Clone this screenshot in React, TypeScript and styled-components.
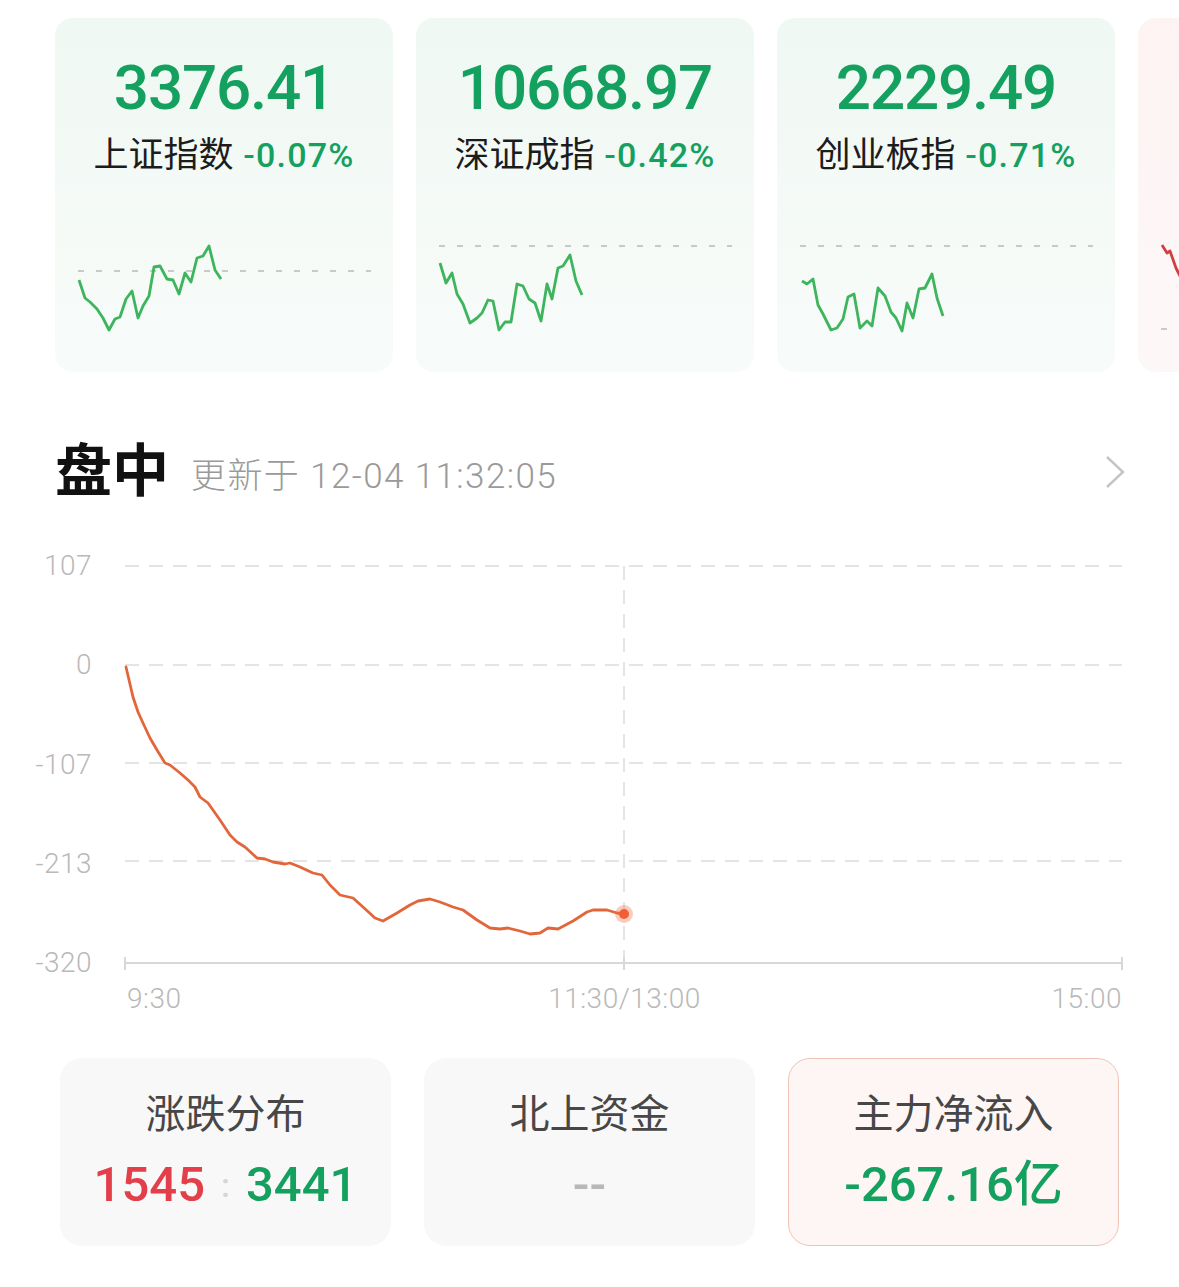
import React from 'react';
import styled, {createGlobalStyle} from 'styled-components';

const GREEN = '#14a05e';
const RED = '#e23f4b';
const FONT = `Roboto, "Noto Sans CJK SC", sans-serif`;

type Pt = [number, number];

type IndexItem = {
    value: string;
    name: string;
    change: string;
    base: number;
    points: Pt[];
    tone: 'down' | 'up';
};

// sparkline points are in card coordinates (svg spans the card width, 150px tall)
const shift = (pts: Pt[], dx: number, dy: number): Pt[] => pts.map(([x, y]) => [x - dx, y - dy]);

const indices: IndexItem[] = [
    {
        value: '3376.41',
        name: '上证指数',
        change: '-0.07%',
        base: 52,
        tone: 'down',
        points: shift([
            [79, 279], [85, 297], [90, 301], [97, 308], [103, 317], [109, 329], [115, 318], [120, 316],
            [126, 298], [132, 290], [138, 317], [143, 305], [149, 295], [154, 266], [160, 265], [167, 278],
            [173, 279], [179, 293], [185, 272], [191, 281], [197, 257], [203, 255], [209, 245], [215, 269], [221, 278],
        ], 55, 218),
    },
    {
        value: '10668.97',
        name: '深证成指',
        change: '-0.42%',
        base: 27,
        tone: 'down',
        points: shift([
            [440, 262], [446, 282], [452, 272], [457, 293], [463, 303], [470, 322], [477, 317], [482, 312],
            [488, 299], [493, 300], [499, 329], [505, 321], [511, 321], [517, 283], [523, 285], [529, 298],
            [535, 302], [541, 320], [547, 283], [552, 298], [558, 267], [563, 265], [570, 254], [576, 280], [582, 294],
        ], 416, 218),
    },
    {
        value: '2229.49',
        name: '创业板指',
        change: '-0.71%',
        base: 27,
        tone: 'down',
        points: shift([
            [802, 280], [807, 283], [813, 278], [818, 304], [823, 313], [831, 329], [837, 327], [843, 318],
            [848, 296], [854, 293], [860, 327], [867, 320], [872, 325], [878, 287], [885, 295], [891, 311],
            [896, 317], [902, 330], [907, 302], [913, 317], [919, 288], [925, 287], [932, 273], [937, 297], [943, 315],
        ], 777, 218),
    },
    {
        value: '',
        name: '',
        change: '',
        base: 111,
        tone: 'up',
        points: [[24, 27], [29, 35], [32, 33], [38, 50], [44, 62]],
    },
];

const flowLine: Pt[] = [
    [126, 667], [133, 697], [138, 712], [143, 723], [150, 738], [157, 750], [165, 763], [170, 765],
    [180, 773], [188, 780], [195, 787], [200, 797], [208, 803], [220, 820], [230, 835], [237, 842],
    [245, 847], [257, 858], [265, 859], [273, 862], [285, 864], [290, 863], [300, 867], [313, 873],
    [322, 875], [330, 885], [340, 895], [353, 898], [363, 907], [375, 918], [383, 921], [397, 913],
    [410, 905], [418, 901], [430, 899], [440, 902], [453, 907], [463, 910], [477, 920], [490, 928],
    [500, 929], [508, 928], [520, 931], [530, 934], [540, 933], [548, 928], [558, 929], [573, 921],
    [587, 912], [593, 910], [607, 910], [617, 913], [624, 914],
];

const toPath = (pts: Pt[]) => pts.map(([x, y]) => `${x},${y}`).join(' ');

const gridRows = [566, 665, 763, 861];

const App = () => (
    <>
        <GlobalStyle/>
        <Page>
            <IndexRow>
                {indices.map((item, i) => (
                    <IndexCard key={i} $tone={item.tone}>
                        <IndexValue>{item.value || '\u00a0'}</IndexValue>
                        <IndexLabel>
                            {item.name || '\u00a0'}
                            {item.change && <IndexChange> {item.change}</IndexChange>}
                        </IndexLabel>
                        <Spark viewBox='0 0 338 150'>
                            <line
                                x1={23}
                                x2={316}
                                y1={item.base}
                                y2={item.base}
                                stroke='#9a9a9a'
                                strokeWidth={1}
                                strokeDasharray='6 12'
                            />
                            <polyline
                                points={toPath(item.points)}
                                fill='none'
                                stroke={item.tone === 'up' ? '#d04040' : '#3cb55c'}
                                strokeWidth={2.8}
                                strokeLinejoin='round'
                            />
                        </Spark>
                    </IndexCard>
                ))}
            </IndexRow>

            <SectionHeader>
                <SectionTitle>盘中</SectionTitle>
                <UpdateTime>更新于 12-04 11:32:05</UpdateTime>
                <Chevron viewBox='0 0 24 36'>
                    <polyline points='4,3 20,18 4,33' fill='none' stroke='#c4c4c4' strokeWidth={2.4}/>
                </Chevron>
            </SectionHeader>

            <ChartRow>
                <YAxis>
                    <AxisText>107</AxisText>
                    <AxisText>0</AxisText>
                    <AxisText>-107</AxisText>
                    <AxisText>-213</AxisText>
                    <AxisText>-320</AxisText>
                </YAxis>
                <ChartSvg viewBox='110 551 1025 427'>
                    {gridRows.map((y) => (
                        <line key={y} x1={125} x2={1122} y1={y} y2={y} stroke='#dcdcdc' strokeWidth={1.5} strokeDasharray='14 10'/>
                    ))}
                    <line x1={624} x2={624} y1={566} y2={963} stroke='#dcdcdc' strokeWidth={1.5} strokeDasharray='14 10'/>
                    <line x1={125} x2={1122} y1={963} y2={963} stroke='#d8d8d8' strokeWidth={2}/>
                    {[125, 624, 1122].map((x) => (
                        <line key={x} x1={x} x2={x} y1={957} y2={970} stroke='#d8d8d8' strokeWidth={2}/>
                    ))}
                    <polyline
                        points={toPath(flowLine)}
                        fill='none'
                        stroke='#e2663a'
                        strokeWidth={2.8}
                        strokeLinejoin='round'
                        strokeLinecap='round'
                    />
                    <circle cx={624} cy={914} r={9} fill='rgba(240, 110, 70, 0.35)'/>
                    <circle cx={624} cy={914} r={5} fill='#f06034'/>
                </ChartSvg>
            </ChartRow>

            <XAxis>
                <AxisText $align='start'>9:30</AxisText>
                <AxisText $align='center'>11:30/13:00</AxisText>
                <AxisText $align='end'>15:00</AxisText>
            </XAxis>

            <StatRow>
                <StatCard>
                    <StatTitle>涨跌分布</StatTitle>
                    <StatValue>
                        <Colored $c={RED}>1545</Colored>
                        <Colon>:</Colon>
                        <Colored $c={GREEN}>3441</Colored>
                    </StatValue>
                </StatCard>
                <StatCard>
                    <StatTitle>北上资金</StatTitle>
                    <StatValue>
                        <Colored $c='#b8b8b8'>--</Colored>
                    </StatValue>
                </StatCard>
                <StatCard $active>
                    <StatTitle>主力净流入</StatTitle>
                    <StatValue>
                        <Colored $c={GREEN}>-267.16亿</Colored>
                    </StatValue>
                </StatCard>
            </StatRow>
        </Page>
    </>
);

const GlobalStyle = createGlobalStyle`
    html, body {
        margin: 0;
        padding: 0;
        background: #ffffff;
    }
    body {
        font-family: ${FONT};
    }
`;

const Page = styled.div`
    width: 1179px;
    height: 1287px;
    overflow: hidden;
    padding-top: 18px;
    box-sizing: border-box;
    background: #ffffff;
`;

const IndexRow = styled.div`
    display: flex;
    gap: 23px;
    padding-left: 55px;
    height: 354px;
    overflow: hidden;
`;

const IndexCard = styled.div<{$tone: 'up' | 'down'}>`
    flex: 0 0 338px;
    height: 354px;
    box-sizing: border-box;
    border-radius: 18px;
    padding-top: 38px;
    display: flex;
    flex-direction: column;
    align-items: center;
    background: ${(p) => (p.$tone === 'up'
        ? 'linear-gradient(180deg, #fdf3f3 0%, #fdf8f8 100%)'
        : 'linear-gradient(180deg, #eff8f3 0%, #f5faf7 60%, #f7fbf9 100%)')};
`;

const IndexValue = styled.div`
    font-size: 62px;
    line-height: 64px;
    font-weight: 500;
    letter-spacing: -1.2px;
    color: ${GREEN};
`;

const IndexLabel = styled.div`
    margin-top: 15px;
    font-size: 35px;
    line-height: 40px;
    color: #1c1c1c;
    white-space: nowrap;
`;

const IndexChange = styled.span`
    font-size: 34px;
    font-weight: 500;
    letter-spacing: 1.2px;
    color: ${GREEN};
`;

const Spark = styled.svg`
    margin-top: 43px;
    width: 338px;
    height: 150px;
    display: block;
`;

const SectionHeader = styled.div`
    display: flex;
    align-items: center;
    margin-top: 70px;
    padding: 0 52px 0 55px;
    height: 60px;
`;

const SectionTitle = styled.div`
    font-size: 57px;
    line-height: 60px;
    font-weight: 700;
    color: #111111;
`;

const UpdateTime = styled.div`
    margin-left: 22px;
    margin-top: 10px;
    font-size: 35px;
    line-height: 40px;
    font-weight: 300;
    letter-spacing: 1.4px;
    color: #9a9a9a;
    flex: 1;
`;

const Chevron = styled.svg`
    width: 24px;
    height: 36px;
`;

const ChartRow = styled.div`
    display: flex;
    margin-top: 49px;
    height: 427px;
`;

const YAxis = styled.div`
    width: 92px;
    display: flex;
    flex-direction: column;
    justify-content: space-between;
    align-items: flex-end;
`;

const AxisText = styled.div<{$align?: 'start' | 'center' | 'end'}>`
    font-size: 28px;
    line-height: 30px;
    font-weight: 300;
    letter-spacing: 0.5px;
    color: #b9b9b9;
    justify-self: ${(p) => p.$align || 'auto'};
`;

const ChartSvg = styled.svg`
    margin-left: 18px;
    width: 1025px;
    height: 427px;
    display: block;
`;

const XAxis = styled.div`
    display: grid;
    grid-template-columns: 1fr auto 1fr;
    margin: 6px 0 0 127px;
    width: 995px;
`;

const StatRow = styled.div`
    display: flex;
    gap: 33px;
    margin-top: 44px;
    padding-left: 60px;
`;

const StatCard = styled.div<{$active?: boolean}>`
    flex: 0 0 331px;
    height: 188px;
    box-sizing: border-box;
    border-radius: 22px;
    padding-top: ${(p) => (p.$active ? '33px' : '34px')};
    display: flex;
    flex-direction: column;
    align-items: center;
    background: ${(p) => (p.$active ? '#fdf6f4' : '#f8f8f8')};
    border: ${(p) => (p.$active ? '1.5px solid #efc4b6' : 'none')};
`;

const StatTitle = styled.div`
    font-size: 40px;
    line-height: 46px;
    color: #474747;
`;

const StatValue = styled.div`
    margin-top: 19px;
    font-size: 49px;
    line-height: 56px;
    font-weight: 500;
    display: flex;
    align-items: center;
    gap: 16px;
`;

const Colored = styled.span<{$c: string}>`
    color: ${(p) => p.$c};
`;

const Colon = styled.span`
    color: #d6d6d6;
    font-size: 34px;
`;

export default App;
